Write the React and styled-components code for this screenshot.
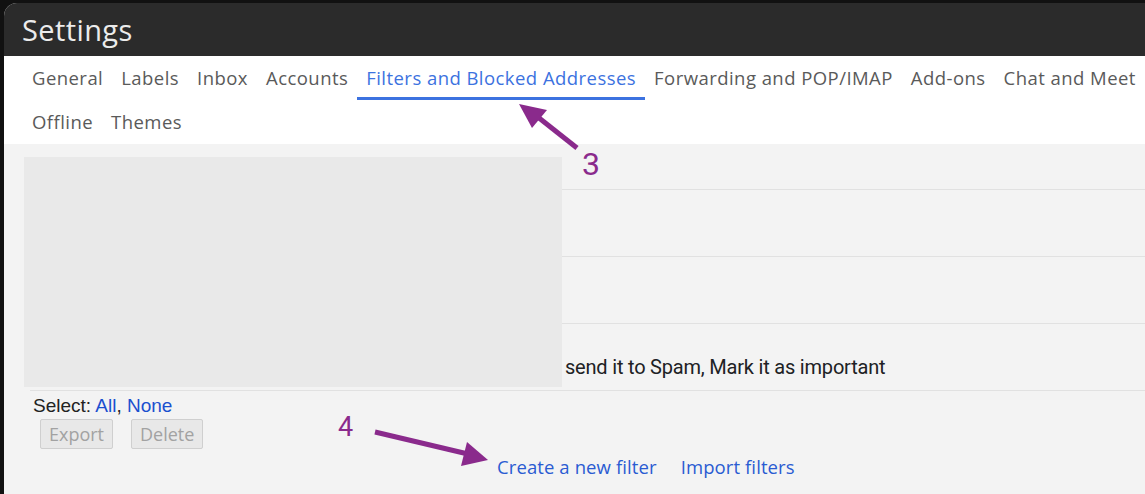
import styled, { createGlobalStyle } from "styled-components";

const GlobalStyle = createGlobalStyle`
  html, body {
    margin: 0;
    padding: 0;
    background: #111111;
    height: 100%;
    overflow: hidden;
  }
  #root {
    height: 100%;
  }
`;

const Page = styled.div`
  position: relative;
  height: 100%;
  padding: 3px 0 0 4px;
  box-sizing: border-box;
  font-family: Roboto, "Liberation Sans", sans-serif;
`;

const Window = styled.div`
  height: 100%;
  border-top-left-radius: 13px;
  overflow: hidden;
  background: #f3f3f3;
  display: flex;
  flex-direction: column;
`;

const Header = styled.div`
  height: 53px;
  background: #2b2b2b;
  display: flex;
  align-items: center;
  padding-left: 18px;
  color: #ececec;
  font-family: "Open Sans", Roboto, sans-serif;
  font-size: 29px;
  letter-spacing: 0.4px;
`;

const TabBar = styled.div`
  background: #ffffff;
  padding-left: 19px;
`;

const TabRow = styled.div`
  display: flex;
  height: 44px;
`;

const Tab = styled.div`
  padding: 0 9px;
  display: flex;
  align-items: center;
  font-family: "Open Sans", Roboto, sans-serif;
  font-size: 18.5px;
  letter-spacing: 0.45px;
  white-space: nowrap;
  color: ${(p) => (p.$active ? "#3c72e0" : "#5a5a5a")};
  border-bottom: 3px solid ${(p) => (p.$active ? "#3c72e0" : "transparent")};
  box-sizing: border-box;
  padding-top: 1px;
`;

const Content = styled.div`
  position: relative;
  flex: 1;
`;

const FilterList = styled.div`
  margin-left: 26px;
`;

const ListHead = styled.div`
  height: 45px;
  border-bottom: 1px solid #e1e1e1;
`;

const FilterRow = styled.div`
  height: 67px;
  border-bottom: 1px solid #e1e1e1;
  display: flex;
  align-items: flex-end;
  padding-left: 535px;
  padding-bottom: 11px;
  box-sizing: border-box;
  font-size: 20px;
  line-height: 24px;
  color: #202124;
  letter-spacing: -0.2px;
`;

const Redaction = styled.div`
  position: absolute;
  left: 20px;
  top: 13px;
  width: 538px;
  height: 230px;
  background: #e9e9e9;
`;

const SelectLine = styled.div`
  padding: 4px 0 0 29px;
  font-family: "Liberation Sans", Arial, sans-serif;
  font-size: 19px;
  line-height: 22px;
  color: #222222;
`;

const Link = styled.span`
  color: ${(p) => (p.$light ? "#2a5bd2" : "#1a4fcf")};
  cursor: pointer;
`;

const Actions = styled.div`
  display: flex;
  gap: 18px;
  padding: 2px 0 0 36px;
`;

const GrayButton = styled.button`
  height: 30px;
  padding: 0 8px;
  background: #e8e8e8;
  border: 1px solid #cfcfcf;
  border-radius: 2px;
  color: #a2a2a2;
  font-family: "Open Sans", Roboto, sans-serif;
  font-size: 18px;
  letter-spacing: 0;
`;

const CreateLinks = styled.div`
  display: flex;
  gap: 24px;
  padding: 7px 0 0 493px;
  font-family: "Open Sans", Roboto, sans-serif;
  font-size: 18.5px;
  letter-spacing: 0.1px;
  line-height: 22px;
`;

const Marker = styled.span`
  position: absolute;
  left: ${(p) => p.$x}px;
  top: ${(p) => p.$y}px;
  color: #8a2a8c;
  font-family: Roboto, sans-serif;
  font-size: ${(p) => p.$size}px;
  line-height: 1;
`;

const Overlay = styled.svg`
  position: absolute;
  left: 0;
  top: 0;
  width: 1145px;
  height: 494px;
  pointer-events: none;
`;

const topTabs = [
  "General",
  "Labels",
  "Inbox",
  "Accounts",
  "Filters and Blocked Addresses",
  "Forwarding and POP/IMAP",
  "Add-ons",
  "Chat and Meet",
];

const App = () => {
  return (
    <>
      <GlobalStyle />
      <Page>
        <Window>
          <Header>Settings</Header>
          <TabBar>
            <TabRow>
              {topTabs.map((t) => (
                <Tab key={t} $active={t === "Filters and Blocked Addresses"}>
                  {t}
                </Tab>
              ))}
            </TabRow>
            <TabRow>
              <Tab>Offline</Tab>
              <Tab>Themes</Tab>
            </TabRow>
          </TabBar>
          <Content>
            <FilterList>
              <ListHead />
              <FilterRow />
              <FilterRow />
              <FilterRow>send it to Spam, Mark it as important</FilterRow>
            </FilterList>
            <Redaction />
            <SelectLine>
              Select: <Link>All</Link>, <Link>None</Link>
            </SelectLine>
            <Actions>
              <GrayButton disabled>Export</GrayButton>
              <GrayButton disabled>Delete</GrayButton>
            </Actions>
            <CreateLinks>
              <Link $light>Create a new filter</Link>
              <Link $light>Import filters</Link>
            </CreateLinks>
          </Content>
        </Window>
        <Marker $x={582} $y={148} $size={32}>3</Marker>
        <Marker $x={338} $y={414} $size={27}>4</Marker>
        <Overlay viewBox="0 0 1145 494">
          <line x1="577" y1="148" x2="534" y2="114" stroke="#8a2a8c" strokeWidth="5" />
          <polygon points="519,104 547,110 532,128" fill="#8a2a8c" />
          <line x1="375" y1="432" x2="468" y2="454" stroke="#8a2a8c" strokeWidth="5" />
          <polygon points="488,460 467,442 461,466" fill="#8a2a8c" />
        </Overlay>
      </Page>
    </>
  );
};

export default App;
